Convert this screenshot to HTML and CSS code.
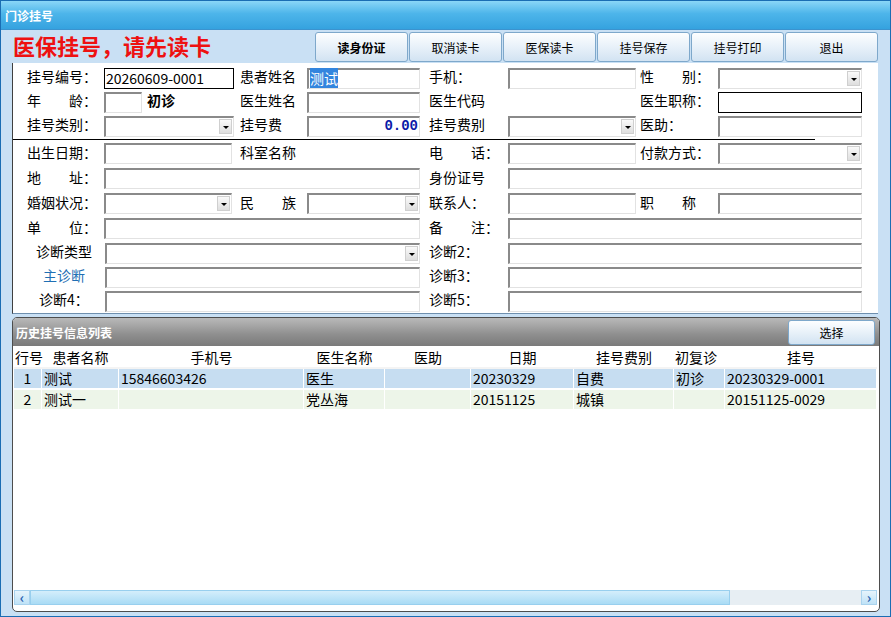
FILE: index.html
```html
<!DOCTYPE html>
<html>
<head>
  <meta charset="utf-8">
  <link rel="stylesheet" href="styles.css">
</head>
<body>
  <div class="window">
    <div class="titlebar">门诊挂号</div>
    <div class="content">
      <div class="toolbar">
        <div class="headline">医保挂号，请先读卡</div>
        <div class="buttons">
          <button class="tool-btn bold">读身份证</button>
          <button class="tool-btn">取消读卡</button>
          <button class="tool-btn">医保读卡</button>
          <button class="tool-btn">挂号保存</button>
          <button class="tool-btn">挂号打印</button>
          <button class="tool-btn">退出</button>
        </div>
      </div>

      <div class="form">
        <!-- row 1 -->
        <div class="lbl c1">挂号编号：</div>
        <div class="field black">20260609-0001</div>
        <div class="lbl c3">患者姓名</div>
        <div class="field"><span class="sel">测试</span></div>
        <div class="lbl c5">手机：</div>
        <div class="field"></div>
        <div class="lbl c7">性　　别：</div>
        <div class="field combo"><i class="drop"></i></div>

        <!-- row 2 -->
        <div class="lbl c1">年　　龄：</div>
        <div class="age"><div class="field small"></div><b>初诊</b></div>
        <div class="lbl c3">医生姓名</div>
        <div class="field"></div>
        <div class="lbl c5">医生代码</div>
        <div></div>
        <div class="lbl c7">医生职称：</div>
        <div class="field black"></div>

        <!-- row 3 -->
        <div class="lbl c1">挂号类别：</div>
        <div class="field combo"><i class="drop"></i></div>
        <div class="lbl c3">挂号费</div>
        <div class="field money">0.00</div>
        <div class="lbl c5">挂号费别</div>
        <div class="field combo"><i class="drop"></i></div>
        <div class="lbl c7">医助：</div>
        <div class="field"></div>

        <div class="separator"></div>

        <!-- row 4 -->
        <div class="lbl c1">出生日期：</div>
        <div class="field short"></div>
        <div class="lbl c3">科室名称</div>
        <div></div>
        <div class="lbl c5">电　　话：</div>
        <div class="field"></div>
        <div class="lbl c7">付款方式：</div>
        <div class="field combo"><i class="drop"></i></div>

        <!-- row 5 -->
        <div class="lbl c1">地　　址：</div>
        <div class="field wide"></div>
        <div class="lbl c5">身份证号</div>
        <div class="field wide"></div>

        <!-- row 6 -->
        <div class="lbl c1">婚姻状况：</div>
        <div class="field combo short"><i class="drop"></i></div>
        <div class="lbl c3">民　　族</div>
        <div class="field combo"><i class="drop"></i></div>
        <div class="lbl c5">联系人：</div>
        <div class="field"></div>
        <div class="lbl c7">职　　称</div>
        <div class="field"></div>

        <!-- row 7 -->
        <div class="lbl c1">单　　位：</div>
        <div class="field wide"></div>
        <div class="lbl c5">备　　注：</div>
        <div class="field wide"></div>

        <!-- row 8 -->
        <div class="lbl diag-type">诊断类型</div>
        <div class="field combo wide indent"><i class="drop"></i></div>
        <div class="lbl c5">诊断2：</div>
        <div class="field wide"></div>

        <!-- row 9 -->
        <div class="lbl main-diag">主诊断</div>
        <div class="field wide indent"></div>
        <div class="lbl c5">诊断3：</div>
        <div class="field wide"></div>

        <!-- row 10 -->
        <div class="lbl diag-4">诊断4：</div>
        <div class="field wide indent"></div>
        <div class="lbl c5">诊断5：</div>
        <div class="field wide"></div>
      </div>

      <div class="history">
        <div class="history-head">
          <span>历史挂号信息列表</span>
          <button class="pick-btn">选择</button>
        </div>
        <div class="grid-area">
          <table class="grid">
            <colgroup>
              <col style="width:28px"><col style="width:77px"><col style="width:185px">
              <col style="width:81px"><col style="width:86px"><col style="width:103px">
              <col style="width:100px"><col style="width:51px"><col style="width:152px">
            </colgroup>
            <thead>
              <tr>
                <th class="left">行号</th><th>患者名称</th><th>手机号</th><th>医生名称</th><th>医助</th>
                <th>日期</th><th>挂号费别</th><th class="left">初复诊</th><th>挂号</th>
              </tr>
            </thead>
            <tbody>
              <tr class="row-a">
                <td class="num">1</td><td>测试</td><td>15846603426</td><td>医生</td><td></td>
                <td>20230329</td><td>自费</td><td>初诊</td><td>20230329-0001</td>
              </tr>
              <tr class="row-b">
                <td class="num">2</td><td>测试一</td><td></td><td>党丛海</td><td></td>
                <td>20151125</td><td>城镇</td><td></td><td>20151125-0029</td>
              </tr>
            </tbody>
          </table>
        </div>
        <div class="hscroll">
          <div class="sb-btn">&#8249;</div>
          <div class="sb-thumb"></div>
          <div class="sb-track"></div>
          <div class="sb-btn">&#8250;</div>
        </div>
      </div>
    </div>
  </div>
</body>
</html>
```

FILE: styles.css
```css
body {
  margin: 0;
  font-family: "Noto Sans CJK SC", sans-serif;
  background: #ffffff;
}
.window {
  width: 891px;
  height: 617px;
  box-sizing: border-box;
  border: 1px solid #1a6db3;
  background-color: #c9e0f4;
  display: flex;
  flex-direction: column;
  overflow: hidden;
}
.titlebar {
  height: 29px;
  line-height: 30px;
  padding-left: 4px;
  color: #fff;
  font-size: 12px;
  font-weight: bold;
  background: linear-gradient(#8ad6f7, #4db5ea 45%, #35a2df);
  border-bottom: 1px solid #3b93cf;
  box-sizing: border-box;
}
.content {
  padding: 0 12px 0 11px;
  display: flex;
  flex-direction: column;
}
.toolbar {
  height: 33px;
  display: flex;
  align-items: flex-start;
}
.headline {
  color: #ee1111;
  font-size: 22px;
  font-weight: bold;
  line-height: 30px;
  padding-left: 1px;
}
.buttons {
  margin-left: auto;
  display: flex;
  gap: 1px;
  padding-top: 2px;
}
button {
  font-family: "Noto Sans CJK SC", sans-serif;
  cursor: pointer;
}
.tool-btn {
  width: 93px;
  height: 30px;
  font-size: 12px;
  color: #000;
  border: 1px solid #7ea8cb;
  border-radius: 3px;
  background: linear-gradient(#fdfeff, #e8f1f9 50%, #d2e3f2);
  padding: 0;
}
.tool-btn.bold {
  font-weight: bold;
}
.form {
  height: 251px;
  box-sizing: border-box;
  background: #fff;
  border-left: 1px solid #404040;
  border-bottom: 1px solid #6e8fae;
  padding-top: 3px;
  display: grid;
  grid-template-columns: 91px 130px 73px 113px 88px 128px 82px 144px;
  grid-template-rows: 24px 24px 24px 3px 25px 25px 25px 25px 24px 24px 24px;
  align-items: center;
  font-size: 14px;
}
.lbl {
  white-space: nowrap;
  line-height: 18px;
  color: #000;
  margin-bottom: 4px;
}
.c1 { padding-left: 14px; }
.c3 { padding-left: 6px; }
.c5 { padding-left: 9px; }
.c7 { padding-left: 4px; }
.diag-type { padding-left: 23px; }
.main-diag { padding-left: 30px; color: #1f6fb4; }
.diag-4 { padding-left: 26px; }
.field {
  height: 21px;
  box-sizing: border-box;
  border-top: 2px solid #8a8a8a;
  border-left: 2px solid #8a8a8a;
  border-right: 1px solid #e2e2e2;
  border-bottom: 1px solid #e2e2e2;
  background: #fff;
  position: relative;
  line-height: 17px;
  padding-left: 1px;
  white-space: nowrap;
}
.field.black {
  border: 1px solid #000;
  line-height: 19px;
  padding-left: 1px;
}
.field.short { width: 128px; }
.field.small { width: 38px; }
.field.wide { grid-column: span 3; }
.field.indent { margin-left: 1px; }
.sel {
  background: #3385de;
  color: #fff;
}
.money {
  text-align: right;
  padding-right: 1px;
  font-family: "Liberation Mono", monospace;
  font-weight: bold;
  color: #0a1aa8;
}
.age {
  display: flex;
  align-items: center;
}
.age b {
  margin-left: 5px;
  line-height: 18px;
  margin-bottom: 4px;
}
.drop {
  position: absolute;
  right: 1px;
  top: 1px;
  width: 13px;
  height: 15px;
  box-sizing: border-box;
  border: 1px solid #cfcfcf;
  background: linear-gradient(#fafafa, #dedede);
}
.drop::after {
  content: "";
  position: absolute;
  left: 3px;
  top: 6px;
  border-left: 3px solid transparent;
  border-right: 3px solid transparent;
  border-top: 3px solid #000;
}
.separator {
  grid-column: 1 / -1;
  width: 802px;
  height: 1px;
  background: #000;
}
.history {
  margin-top: 3px;
  margin-right: -2px;
  height: 295px;
  box-sizing: border-box;
  border: 1px solid #4d4d4d;
  border-radius: 5px;
  background: #fff;
  display: flex;
  flex-direction: column;
  overflow: hidden;
}
.history-head {
  height: 28px;
  background: linear-gradient(#b9b9b9, #8e8e8e 60%, #7a7a7a);
  display: flex;
  align-items: center;
  color: #fff;
  font-size: 12px;
  font-weight: bold;
  padding-left: 3px;
}
.pick-btn {
  margin-left: auto;
  margin-right: 4px;
  width: 87px;
  height: 25px;
  font-size: 12px;
  color: #000;
  border: 1px solid #7ea8cb;
  border-radius: 3px;
  background: linear-gradient(#fdfeff, #e8f1f9 50%, #d2e3f2);
  padding: 0;
}
.grid-area {
  flex: 1;
  padding: 0 1px 0 1px;
  overflow: hidden;
}
.grid {
  table-layout: fixed;
  width: 863px;
  border-collapse: separate;
  border-spacing: 0;
  font-size: 14px;
}
.grid th {
  height: 21px;
  font-weight: normal;
  text-align: center;
  white-space: nowrap;
  border-bottom: 2px solid #f4f4f4;
  padding: 0;
}
.grid th.left {
  text-align: left;
  padding-left: 1px;
}
.grid td {
  height: 19px;
  padding: 0 0 0 2px;
  white-space: nowrap;
  border-right: 1px solid #fff;
  border-bottom: 2px solid #fff;
  line-height: 19px;
}
.grid td.num {
  text-align: center;
  padding: 0;
}
.row-a td { background: #c6ddf1; }
.row-b td { background: #edf5e9; }
.hscroll {
  height: 15px;
  margin: 0 2px 6px 1px;
  display: flex;
}
.sb-btn {
  width: 16px;
  box-sizing: border-box;
  border: 1px solid #a9d3ee;
  background: linear-gradient(#e6f4fc, #bfe2f7);
  color: #2a62b0;
  font-size: 14px;
  font-weight: bold;
  line-height: 12px;
  text-align: center;
}
.sb-thumb {
  width: 700px;
  box-sizing: border-box;
  border: 1px solid #98cfee;
  background: linear-gradient(#d4eefb, #a9dbf5);
}
.sb-track {
  flex: 1;
  background: #e7eef3;
}
```
